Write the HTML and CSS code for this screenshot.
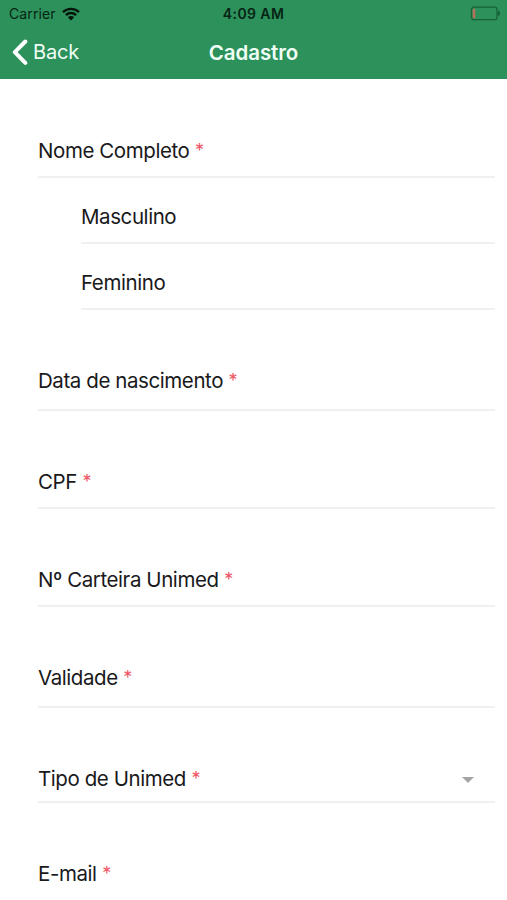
FILE: index.html
```html
<!DOCTYPE html>
<html lang="pt-BR">

<head>
    <meta charset="UTF-8">
    <meta name="viewport" content="width=device-width, initial-scale=1.0">
    <title>Cadastro</title>
    <link rel="stylesheet" href="styles.css">
</head>

<body>

    <header class="header">
        <div class="status-bar">
            <div class="carrier">
                <span>Carrier</span>
                <svg class="wifi" viewBox="0 0 18 14" width="18" height="14">
                    <path d="M1 5.2C5.5 0.8 12.5 0.8 17 5.2" />
                    <path d="M3.9 8.1C6.8 5.3 11.2 5.3 14.1 8.1" />
                    <path class="dot" d="M9 13.4L5.9 10.3C7.6 8.7 10.4 8.7 12.1 10.3Z" />
                </svg>
            </div>
            <span class="time">4:09 AM</span>
            <svg class="battery" viewBox="0 0 31 15" width="31" height="15">
                <rect class="case" x="1.5" y="1.2" width="25.5" height="12.5" rx="2.5" />
                <rect class="level" x="2.7" y="2.7" width="2.6" height="9.5" rx="1" />
                <path class="tip" d="M28 4.5C30.8 5.2 30.8 9.3 28 10Z" />
            </svg>
        </div>
        <nav class="navbar">
            <a class="back" href="#">
                <svg viewBox="0 0 16 27" width="16" height="27">
                    <path d="M13.3 2.5L2.8 13.2L13.3 23.9" />
                </svg>
                <span>Back</span>
            </a>
            <h1 class="title">Cadastro</h1>
        </nav>
    </header>

    <form class="form">
        <div class="item"><label>Nome Completo</label><span class="required">*</span></div>
        <!-- Sexo -->
        <div class="radio"><label>Masculino</label></div>
        <div class="radio"><label>Feminino</label></div>
        <div class="item date"><label>Data de nascimento</label><span class="required">*</span></div>
        <div class="item"><label>CPF</label><span class="required">*</span></div>
        <div class="item"><label>Nº Carteira Unimed</label><span class="required">*</span></div>
        <div class="item date"><label>Validade</label><span class="required">*</span></div>
        <div class="item select">
            <label>Tipo de Unimed</label><span class="required">*</span>
            <span class="arrow"></span>
        </div>
        <div class="item"><label>E-mail</label><span class="required">*</span></div>
    </form>

</body>

</html>
```

FILE: styles.css
```css
* {
    box-sizing: border-box;
}

body {
    height: 100vh;
    margin: 0;
    overflow: hidden;
    font-family: Inter, "Liberation Sans", sans-serif;
    background: #fff;
    color: #19191b;
}

.header {
    height: 79px;
    background: #2c915b;
}

.status-bar,
.navbar {
    display: grid;
    grid-template-columns: 1fr auto 1fr;
    align-items: center;
}

.status-bar {
    height: 27px;
    padding: 0 6px 0 9px;
    color: #062413;
    font-size: 14px;
}

.carrier {
    display: flex;
    align-items: center;
    gap: 6px;
    letter-spacing: 0.1px;
}

.wifi {
    fill: none;
    stroke: #03150b;
    stroke-width: 2.4;
}

.wifi .dot {
    fill: #03150b;
    stroke: none;
}

.time {
    margin-right: 3px;
    font-weight: 600;
    letter-spacing: 0.4px;
}

.battery {
    justify-self: end;
}

.battery .case {
    fill: none;
    stroke: #176238;
    stroke-width: 1.3;
}

.battery .level {
    fill: #b5715a;
}

.battery .tip {
    fill: #176238;
}

.navbar {
    height: 50px;
    padding: 0 12px;
    color: #f0fff5;
}

.back {
    display: flex;
    align-items: center;
    gap: 5px;
    color: inherit;
    font-size: 20px;
    letter-spacing: -0.15px;
    text-decoration: none;
}

.back path {
    fill: none;
    stroke: #fff;
    stroke-width: 4;
    stroke-linecap: round;
    stroke-linejoin: round;
}

.title {
    margin: 0;
    font-size: 20.5px;
    font-weight: 600;
    letter-spacing: -0.1px;
}

.form {
    padding: 0 12px 0 38px;
    font-size: 20.5px;
    line-height: 24px;
    letter-spacing: -0.42px;
}

.item,
.radio {
    display: flex;
    align-items: flex-end;
    border-bottom: 2px solid #f0f0f1;
}

.item {
    height: 98px;
    padding-bottom: 13px;
}

.item:first-child {
    height: 99px;
}

.item:last-child {
    border-bottom-color: transparent;
}

.radio {
    height: 66px;
    margin-left: 43px;
    padding-bottom: 13px;
}

/* date pickers are a little taller than text inputs */
.date {
    height: 101px;
    padding-bottom: 16px;
}

.select {
    height: 95px;
    padding-bottom: 10px;
}

.required {
    margin-left: 5.5px;
    color: #ed5565;
    font-size: 18px;
}

.arrow {
    margin: 0 21px 8px auto;
    border: 6px solid transparent;
    border-top-color: #a5a5a5;
    border-bottom: 0;
}
```
